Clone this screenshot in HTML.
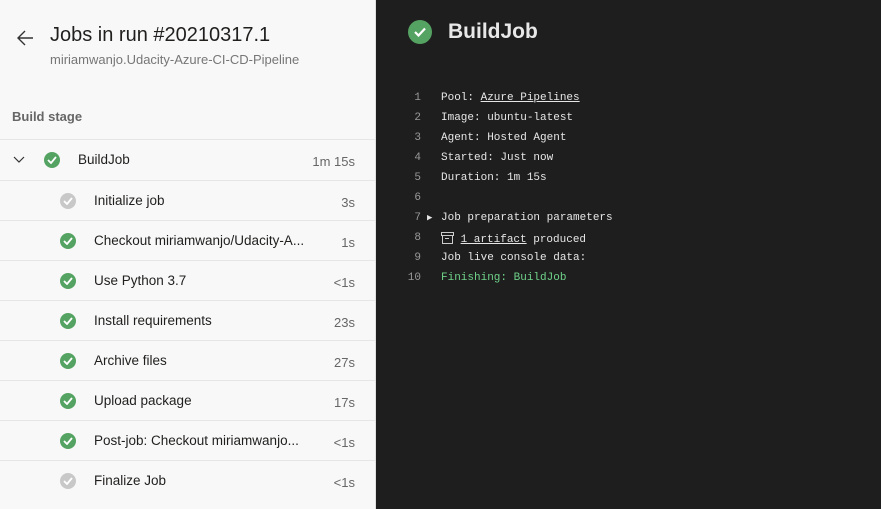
<!DOCTYPE html>
<html><head><meta charset="utf-8"><style>
*{margin:0;padding:0;box-sizing:border-box}
body{width:881px;height:509px;overflow:hidden;font-family:"Liberation Sans",sans-serif;background:#1e1e1e;position:relative}
#left{position:absolute;left:0;top:0;width:376px;height:509px;background:#f8f8f8;border-right:1px solid #e0e0e0}
.title{position:absolute;left:50px;top:24px;font-size:20px;color:#201f1e}
.sub{position:absolute;left:50px;top:52px;font-size:13px;color:#767676}
.back{position:absolute;left:15px;top:28px}
.stage{position:absolute;left:12px;top:109px;font-size:13px;color:#666;font-weight:600}
.row{position:absolute;left:0;width:375px;height:40px;border-top:1px solid #e6e6e6;font-size:13.5px;color:#201f1e}
.row .ic{position:absolute;top:12px;width:16px;height:16px;border-radius:50%;background:#55a362}
.row .ic.g{background:#c8c8c8}
.row .ic svg{position:absolute;left:3px;top:4px}
.row .n{position:absolute;top:12px}
.row .t{position:absolute;right:20px;top:14px;font-size:13px;color:#666}
.bj{position:absolute;left:408px;top:20px;width:24px;height:24px;border-radius:50%;background:#55a362}
.bjt{position:absolute;left:448px;top:20px;font-size:21px;color:#e8e8e8;font-weight:bold}
.l{position:absolute;height:20px;white-space:pre;left:441px}
.ln{position:absolute;width:44px;text-align:right;left:377px;color:#999}
</style></head><body>
<div id="left">
<svg class="back" width="20" height="20" viewBox="0 0 20 20"><path d="M18 10H3M10 3L3 10l7 7" fill="none" stroke="#333" stroke-width="1.4"/></svg>
<div class="title">Jobs in run #20210317.1</div>
<div class="sub">miriamwanjo.Udacity-Azure-CI-CD-Pipeline</div>
<div class="stage">Build stage</div>

<div class="row" style="top:139px"><svg style="position:absolute;left:13px;top:16px" width="12" height="8" viewBox="0 0 12 8"><path d="M1 1l5 5 5-5" fill="none" stroke="#333" stroke-width="1.2"/></svg><div class="ic" style="left:44px"><svg width="10" height="8" viewBox="0 0 10 8"><path d="M1 4l3 3 5-6" fill="none" stroke="#fff" stroke-width="1.8"/></svg></div><div class="n" style="left:78px">BuildJob</div><div class="t">1m 15s</div></div>
<div class="row" style="top:180px"><div class="ic g" style="left:60px"><svg width="10" height="8" viewBox="0 0 10 8"><path d="M1 4l3 3 5-6" fill="none" stroke="#fff" stroke-width="1.8"/></svg></div><div class="n" style="left:94px">Initialize job</div><div class="t">3s</div></div>
<div class="row" style="top:220px"><div class="ic" style="left:60px"><svg width="10" height="8" viewBox="0 0 10 8"><path d="M1 4l3 3 5-6" fill="none" stroke="#fff" stroke-width="1.8"/></svg></div><div class="n" style="left:94px">Checkout miriamwanjo/Udacity-A...</div><div class="t">1s</div></div>
<div class="row" style="top:260px"><div class="ic" style="left:60px"><svg width="10" height="8" viewBox="0 0 10 8"><path d="M1 4l3 3 5-6" fill="none" stroke="#fff" stroke-width="1.8"/></svg></div><div class="n" style="left:94px">Use Python 3.7</div><div class="t">&lt;1s</div></div>
<div class="row" style="top:300px"><div class="ic" style="left:60px"><svg width="10" height="8" viewBox="0 0 10 8"><path d="M1 4l3 3 5-6" fill="none" stroke="#fff" stroke-width="1.8"/></svg></div><div class="n" style="left:94px">Install requirements</div><div class="t">23s</div></div>
<div class="row" style="top:340px"><div class="ic" style="left:60px"><svg width="10" height="8" viewBox="0 0 10 8"><path d="M1 4l3 3 5-6" fill="none" stroke="#fff" stroke-width="1.8"/></svg></div><div class="n" style="left:94px">Archive files</div><div class="t">27s</div></div>
<div class="row" style="top:380px"><div class="ic" style="left:60px"><svg width="10" height="8" viewBox="0 0 10 8"><path d="M1 4l3 3 5-6" fill="none" stroke="#fff" stroke-width="1.8"/></svg></div><div class="n" style="left:94px">Upload package</div><div class="t">17s</div></div>
<div class="row" style="top:420px"><div class="ic" style="left:60px"><svg width="10" height="8" viewBox="0 0 10 8"><path d="M1 4l3 3 5-6" fill="none" stroke="#fff" stroke-width="1.8"/></svg></div><div class="n" style="left:94px">Post-job: Checkout miriamwanjo...</div><div class="t">&lt;1s</div></div>
<div class="row" style="top:460px"><div class="ic g" style="left:60px"><svg width="10" height="8" viewBox="0 0 10 8"><path d="M1 4l3 3 5-6" fill="none" stroke="#fff" stroke-width="1.8"/></svg></div><div class="n" style="left:94px">Finalize Job</div><div class="t">&lt;1s</div></div>
</div>
<div class="bj"><svg style="position:absolute;left:6px;top:7px" width="12" height="10" viewBox="0 0 12 10"><path d="M1 5l3.5 3.5L11 1.5" fill="none" stroke="#fff" stroke-width="2.2"/></svg></div>
<div class="bjt">BuildJob</div>
<div style="position:absolute;left:0;top:92px;font-family:'Liberation Mono',monospace;font-size:11px;color:#e6e6e6;width:881px">
<div class="ln" style="top:0">1</div><div class="l" style="top:0">Pool: <u>Azure Pipelines</u></div>
<div class="ln" style="top:20px">2</div><div class="l" style="top:20px">Image: ubuntu-latest</div>
<div class="ln" style="top:40px">3</div><div class="l" style="top:40px">Agent: Hosted Agent</div>
<div class="ln" style="top:60px">4</div><div class="l" style="top:60px">Started: Just now</div>
<div class="ln" style="top:80px">5</div><div class="l" style="top:80px">Duration: 1m 15s</div>
<div class="ln" style="top:100px">6</div>
<div class="ln" style="top:120px">7</div><div class="l" style="left:427px;font-size:9px;top:121px">▶</div><div class="l" style="top:120px">Job preparation parameters</div>
<div class="ln" style="top:140px">8</div><div class="l" style="top:140px"><svg width="13" height="12" viewBox="0 0 13 12" style="vertical-align:-2px"><rect x="0.5" y="0.5" width="12" height="3" fill="none" stroke="#ccc"/><path d="M1.5 3.5v8h10v-8M4 6.5h4" fill="none" stroke="#ccc"/></svg> <u>1 artifact</u> produced</div>
<div class="ln" style="top:160px">9</div><div class="l" style="top:160px">Job live console data:</div>
<div class="ln" style="top:180px">10</div><div class="l" style="top:180px;color:#6fd28a">Finishing: BuildJob</div>
</div>
</body></html>
